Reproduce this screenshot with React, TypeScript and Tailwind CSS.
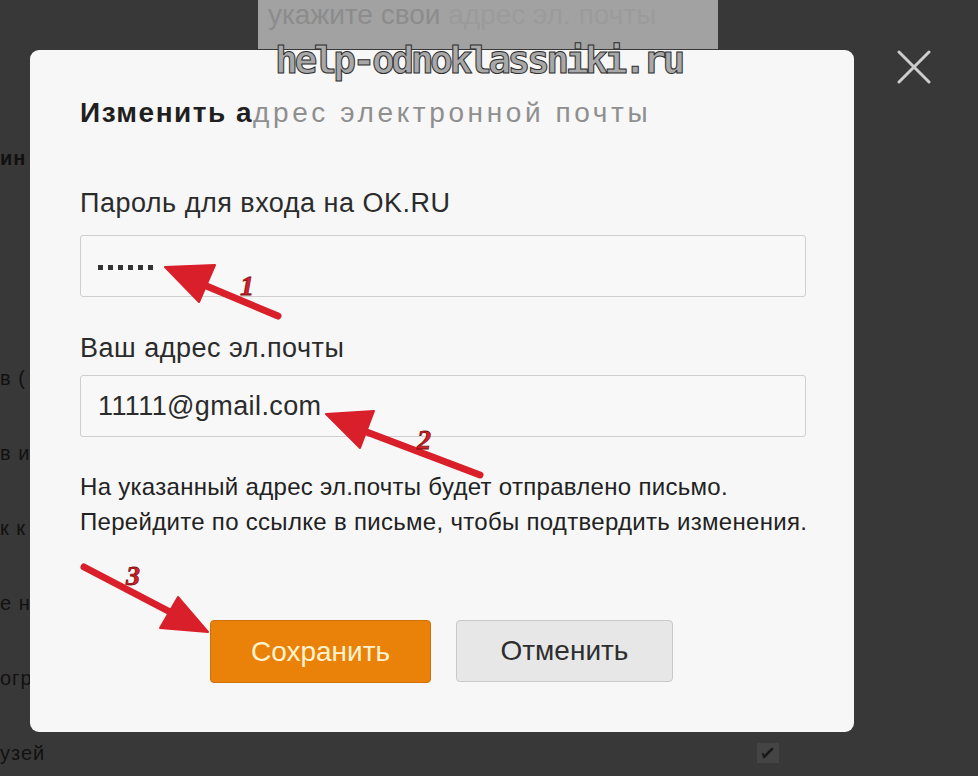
import React from "react";

const SANS = "font-['Liberation_Sans',Arial,sans-serif]";

const SIDE_ROWS = [
  { text: "в (", mt: "mt-[196px]" },
  { text: "в и", mt: "mt-[51px]" },
  { text: "к к", mt: "mt-[51px]" },
  { text: "е на", mt: "mt-[51px]" },
  { text: "огр", mt: "mt-[51px]" },
  { text: "узей", mt: "mt-[51px]" },
];

function Backdrop() {
  return (
    <div className="absolute inset-0 flex">
      {/* left edge of the page under the dialog */}
      <div className={`flex flex-col w-[60px] pt-[146px] ${SANS} text-[20px] leading-[24px] tracking-[1px] text-[#111]`}>
        <div className="font-bold">ин</div>
        {SIDE_ROWS.map((r) => (
          <div key={r.text} className={`${r.mt} whitespace-nowrap`}>
            {r.text}
          </div>
        ))}
      </div>
      <div className="flex flex-col flex-1">
        <div className="ml-[198px] w-[460px] h-[49px] bg-[#a2a2a2] overflow-hidden pl-[10px]">
          <div className={`${SANS} text-[28px] leading-[30px] text-[#8c8c8c] whitespace-nowrap`}>
            укажите свои <span className="text-[#9b9b9b]">адрес эл. почты</span>
          </div>
        </div>
      </div>
    </div>
  );
}

function Arrows() {
  const red = "#d91f2a";
  const num = "font-['Liberation_Serif',serif] font-bold italic";
  return (
    <svg className="absolute inset-0 pointer-events-none" width="978" height="776" viewBox="0 0 978 776">
      {/* 1 */}
      <line x1="204" y1="285" x2="278" y2="316" stroke={red} strokeWidth="7" strokeLinecap="round" />
      <polygon points="165,267 215,265 199,302" fill={red} stroke={red} strokeWidth="2" strokeLinejoin="round" />
      <text x="240" y="295" className={num} fontSize="28" fill={red} stroke="#7a0d12" strokeWidth="0.8">1</text>
      {/* 2 */}
      <line x1="364" y1="431" x2="480" y2="475" stroke={red} strokeWidth="7" strokeLinecap="round" />
      <polygon points="326,414 374,411 360,448" fill={red} stroke={red} strokeWidth="2" strokeLinejoin="round" />
      <text x="417" y="449" className={num} fontSize="28" fill={red} stroke="#7a0d12" strokeWidth="0.8">2</text>
      {/* 3 */}
      <line x1="84" y1="567" x2="172" y2="613" stroke={red} strokeWidth="7" strokeLinecap="round" />
      <polygon points="208,632 178,597 160,628" fill={red} stroke={red} strokeWidth="2" strokeLinejoin="round" />
      <text x="126" y="585" className={num} fontSize="28" fill={red} stroke="#7a0d12" strokeWidth="0.8">3</text>
    </svg>
  );
}

function Field({ children }: { children: React.ReactNode }) {
  return (
    <div className="h-[62px] w-[726px] rounded-[3px] border border-[#cfcfcf] bg-[#f8f8f8] flex items-center pl-[17px]">
      {children}
    </div>
  );
}

export default function App() {
  return (
    <div className={`relative w-[978px] h-[776px] overflow-hidden bg-[#393838] ${SANS}`}>
      <Backdrop />

      {/* dialog */}
      <div className="absolute left-[30px] top-[50px] w-[824px] h-[682px] rounded-[9px] bg-[#f7f7f7] pl-[50px] pt-[47px] flex flex-col">
        <h2 className="text-[28px] leading-[32px] tracking-[3.6px] text-[#8f8f8f] whitespace-nowrap">
          <span className="font-bold tracking-[1.5px] text-[#1f1f1f]">Изменить а</span>дрес электронной почты
        </h2>

        <label className="mt-[59px] text-[27px] leading-[31px] tracking-[0.5px] text-[#2b2b2b]">Пароль для входа на OK.RU</label>
        <div className="mt-[16px]">
          <Field>
            <div className="flex gap-[5px] mt-[2px]">
              {[0, 1, 2, 3, 4, 5].map((i) => (
                <span key={i} className="w-[5px] h-[5px] bg-[#333]" />
              ))}
            </div>
          </Field>
        </div>

        <label className="mt-[36px] text-[27px] leading-[31px] tracking-[0.5px] text-[#2b2b2b]">Ваш адрес эл.почты</label>
        <div className="mt-[11px]">
          <Field>
            <span className="text-[27px] leading-[30px] tracking-[0.4px] text-[#2b2b2b]">11111@gmail.com</span>
          </Field>
        </div>

        <p className="mt-[32px] text-[24px] leading-[35px] tracking-[0.3px] text-[#222] whitespace-nowrap">
          На указанный адрес эл.почты будет отправлено письмо.
          <br />
          Перейдите по ссылке в письме, чтобы подтвердить изменения.
        </p>

        <div className="mt-[81px] flex gap-[25px] pl-[130px]">
          <button className="w-[221px] h-[63px] rounded-[4px] bg-[#ea8108] border border-[#d0700a] text-[28px] text-[#fff3cf]">
            Сохранить
          </button>
          <button className="w-[217px] h-[62px] rounded-[4px] bg-[#e7e7e7] border border-[#c9c9c9] text-[28px] text-[#2e2e2e]">
            Отменить
          </button>
        </div>
      </div>

      {/* watermark */}
      <div className="absolute left-[275px] top-[38px] font-['DejaVu_Sans_Mono',monospace] font-bold text-[38px] leading-[44px] tracking-[-3.5px] text-[#a8a8a8] [-webkit-text-stroke:1px_#2e2e2e] whitespace-nowrap">
        help-odnoklassniki.ru
      </div>

      {/* close */}
      <svg className="absolute left-[896px] top-[50px]" width="36" height="34" viewBox="0 0 36 34">
        <path d="M3 2 L33 32 M33 2 L3 32" stroke="#cdcdcd" strokeWidth="3" strokeLinecap="round" />
      </svg>

      {/* checkbox peeking below dialog */}
      <div className="absolute left-[757px] top-[743px] w-[22px] h-[20px] bg-[#444] flex items-center justify-center">
        <svg width="12" height="12" viewBox="0 0 12 12">
          <path d="M2 10 L10 2" stroke="#1a1a1a" strokeWidth="2.5" strokeLinecap="round" />
          <path d="M2 10 L1 7" stroke="#1a1a1a" strokeWidth="2" strokeLinecap="round" />
        </svg>
      </div>

      <Arrows />
    </div>
  );
}
